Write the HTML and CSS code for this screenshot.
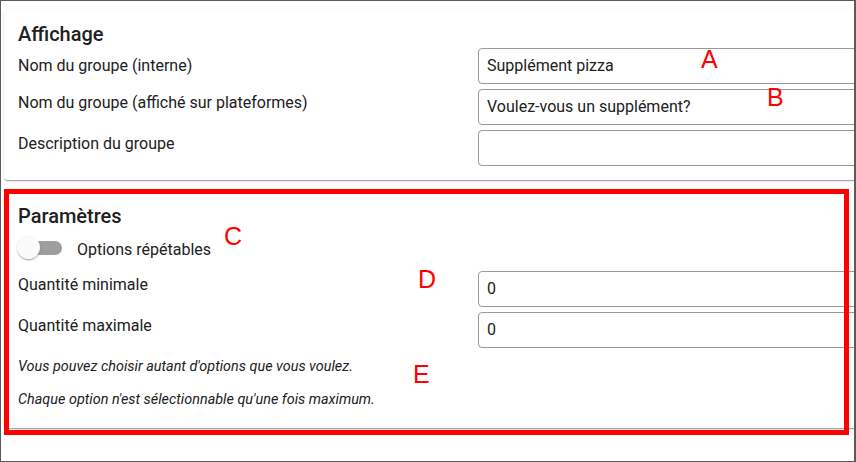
FILE: index.html
```html
<!DOCTYPE html>
<html lang="fr">
<head>
<meta charset="utf-8">
<title>Groupe</title>
<link rel="stylesheet" href="styles.css">
</head>
<body>
<div class="frame">
  <div class="cards">
    <section class="card">
      <h2 class="card-title">Affichage</h2>
      <div class="rows">
        <div class="row">
          <label class="label label-first">Nom du groupe (interne)</label>
          <div class="input">Supplément pizza</div>
        </div>
        <div class="row">
          <label class="label">Nom du groupe (affiché sur plateformes)</label>
          <div class="input">Voulez-vous un supplément?</div>
        </div>
        <div class="row">
          <label class="label">Description du groupe</label>
          <div class="input"></div>
        </div>
      </div>
    </section>
    <section class="card card-params">
      <h2 class="card-title title-params">Paramètres</h2>
      <div class="switch-row">
        <span class="switch"><span class="switch-track"></span><span class="switch-knob"></span></span>
        <span class="switch-label">Options répétables</span>
      </div>
      <div class="rows rows-params">
        <div class="row">
          <label class="label">Quantité minimale</label>
          <div class="input">0</div>
        </div>
        <div class="row">
          <label class="label">Quantité maximale</label>
          <div class="input">0</div>
        </div>
      </div>
      <p class="hint hint-first">Vous pouvez choisir autant d'options que vous voulez.</p>
      <p class="hint">Chaque option n'est sélectionnable qu'une fois maximum.</p>
    </section>
  </div>
  <div class="highlight"></div>
  <span class="mark mark-a">A</span>
  <span class="mark mark-b">B</span>
  <span class="mark mark-c">C</span>
  <span class="mark mark-d">D</span>
  <span class="mark mark-e">E</span>
</div>
</body>
</html>
```

FILE: styles.css
```css
html, body {
  margin: 0;
  padding: 0;
  background: #ffffff;
}

.frame {
  position: relative;
  width: 856px;
  height: 462px;
  box-sizing: border-box;
  border: 1px solid #5a5a5a;
  border-right-width: 2px;
  overflow: hidden;
  background: #ffffff;
  font-family: Roboto, "Liberation Sans", sans-serif;
  color: #212121;
}

.cards {
  padding: 9px 0 0 3px;
}

.card {
  width: 920px;
  box-sizing: border-box;
  background: #ffffff;
  border-radius: 4px;
  padding: 12px 14px 14px 14px;
  box-shadow: 0 2px 1px -1px rgba(0, 0, 0, 0.2), 0 1px 1px 0 rgba(0, 0, 0, 0.14), 0 1px 3px 0 rgba(0, 0, 0, 0.12);
}

.card-params {
  margin-top: 12px;
  padding-bottom: 19px;
}

.card-title {
  margin: 0 0 2px 0;
  font-size: 20px;
  font-weight: 500;
  line-height: 24px;
}

.title-params {
  margin-bottom: 10px;
}

.rows {
  display: flex;
  flex-direction: column;
  gap: 5px;
}

.rows-params {
  margin-top: 13px;
}

.row {
  display: grid;
  grid-template-columns: 460px 1fr;
  align-items: start;
}

.label {
  font-size: 16px;
  line-height: 20px;
  padding-top: 4px;
}

.label-first {
  padding-top: 8px;
}

.input {
  height: 36px;
  box-sizing: border-box;
  border: 1px solid #9a9a9a;
  border-radius: 4px;
  padding: 0 8px;
  font-size: 16px;
  line-height: 34px;
  background: #ffffff;
}

.switch-row {
  display: flex;
  align-items: center;
  height: 20px;
}

.switch {
  position: relative;
  width: 44px;
  height: 20px;
  flex: none;
}

.switch-track {
  position: absolute;
  left: 10px;
  top: 3px;
  width: 34px;
  height: 14px;
  border-radius: 7px;
  background: #9e9e9e;
}

.switch-knob {
  position: absolute;
  left: -1px;
  top: -2px;
  width: 23px;
  height: 23px;
  border-radius: 50%;
  background: #fafafa;
  box-shadow: 0 2px 1px -1px rgba(0, 0, 0, 0.2), 0 1px 1px 0 rgba(0, 0, 0, 0.14), 0 1px 3px 0 rgba(0, 0, 0, 0.12);
}

.switch-label {
  margin-left: 15px;
  font-size: 16px;
  line-height: 20px;
  padding-top: 3px;
}

.hint {
  margin: 15px 0 0 0;
  font-size: 14.4px;
  line-height: 18px;
  font-style: italic;
}

.hint-first {
  margin-top: 10px;
}

.highlight {
  position: absolute;
  left: 3px;
  top: 188px;
  width: 845px;
  height: 246px;
  box-sizing: border-box;
  border: 5px solid #ff0000;
}

.mark {
  position: absolute;
  font-family: "Liberation Sans", Arial, sans-serif;
  font-size: 25px;
  line-height: 25px;
  color: #ff0000;
}

.mark-a { left: 700px; top: 46px; }
.mark-b { left: 766px; top: 84px; }
.mark-c { left: 223px; top: 223px; }
.mark-d { left: 417px; top: 266px; }
.mark-e { left: 412px; top: 361px; }
```
